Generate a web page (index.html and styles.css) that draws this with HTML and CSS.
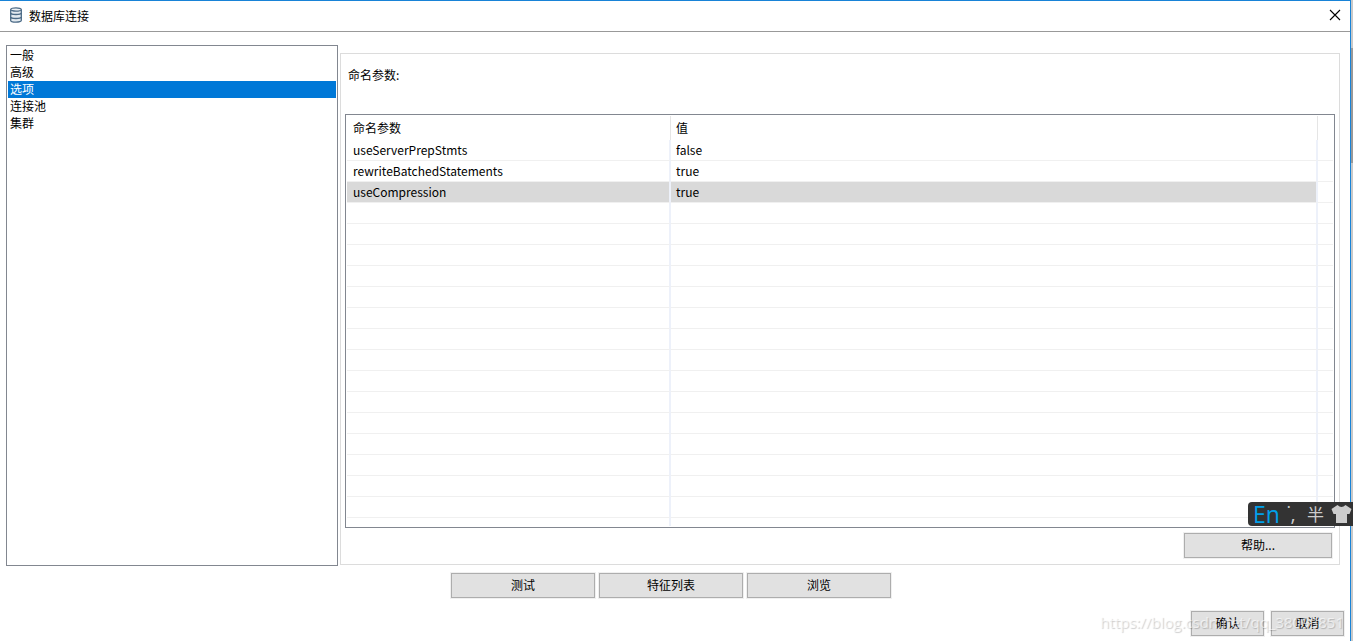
FILE: index.html
```html
<!DOCTYPE html>
<html lang="zh-CN">
<head>
<meta charset="utf-8">
<meta name="viewport" content="width=device-width, initial-scale=1">
<title>数据库连接</title>
<link rel="stylesheet" href="styles.css">
</head>
<body>
<div class="screen">
<main class="dialog">
  <header class="titlebar">
    <svg class="titlebar-icon" viewBox="0 0 14 16" aria-hidden="true">
      <path d="M1.700 2.500v11c0 1 2.200 1.700 5.300 1.700s5.300-.7 5.300-1.700v-11" fill="#e3eaf0" stroke="#4b6a86" stroke-width="1.300"/>
      <ellipse cx="7" cy="2.500" rx="5.300" ry="1.700" fill="#eef2f5" stroke="#4b6a86" stroke-width="1.300"/>
      <path d="M1.700 6c0 1 2.200 1.500 5.300 1.500S12.300 7 12.300 6M1.700 10c0 1 2.200 1.500 5.300 1.500s5.300-.5 5.300-1.500" fill="none" stroke="#4b6a86" stroke-width="1.500"/>
    </svg>
    <h1 class="title">数据库连接</h1>
    <button class="close" type="button" aria-label="关闭">
      <svg viewBox="0 0 12 12" aria-hidden="true"><path d="M1 1l10 10M11 1L1 11" stroke="#000" stroke-width="1.100"/></svg>
    </button>
  </header>

  <div class="content">
    <nav class="sections">
      <button class="section" type="button">一般</button>
      <button class="section" type="button">高级</button>
      <button class="section is-selected" type="button" aria-current="true">选项</button>
      <button class="section" type="button">连接池</button>
      <button class="section" type="button">集群</button>
    </nav>

    <section class="panel">
      <h2 class="panel-label">命名参数:</h2>
      <div class="grid">
        <table class="params">
          <colgroup><col class="col-name"><col class="col-value"><col class="col-rest"></colgroup>
          <thead>
            <tr><th scope="col">命名参数</th><th scope="col">值</th><td></td></tr>
          </thead>
          <tbody>
            <tr><td>useServerPrepStmts</td><td>false</td><td></td></tr>
            <tr><td>rewriteBatchedStatements</td><td>true</td><td></td></tr>
            <tr class="is-active"><td>useCompression</td><td>true</td><td></td></tr>
            <tr><td></td><td></td><td></td></tr>
            <tr><td></td><td></td><td></td></tr>
            <tr><td></td><td></td><td></td></tr>
            <tr><td></td><td></td><td></td></tr>
            <tr><td></td><td></td><td></td></tr>
            <tr><td></td><td></td><td></td></tr>
            <tr><td></td><td></td><td></td></tr>
            <tr><td></td><td></td><td></td></tr>
            <tr><td></td><td></td><td></td></tr>
            <tr><td></td><td></td><td></td></tr>
            <tr><td></td><td></td><td></td></tr>
            <tr><td></td><td></td><td></td></tr>
            <tr><td></td><td></td><td></td></tr>
            <tr><td></td><td></td><td></td></tr>
            <tr><td></td><td></td><td></td></tr>
            <tr class="tail"><td></td><td></td><td></td></tr>
          </tbody>
        </table>
      </div>
      <div class="panel-actions"><button class="button button-help" type="button">帮助...</button></div>
    </section>
  </div>

  <div class="tools">
    <button class="button button-tool" type="button">测试</button>
    <button class="button button-tool" type="button">特征列表</button>
    <button class="button button-tool" type="button">浏览</button>
  </div>

  <footer class="confirm">
    <button class="button button-small" type="button">确认</button>
    <button class="button button-small" type="button">取消</button>
  </footer>
</main>
<div class="behind"><div class="behind-thumb"></div></div>

<div class="ime">
  <span class="ime-lang">En</span>
  <span class="ime-punct">˙,</span>
  <span class="ime-width">半</span>
  <svg class="ime-shirt" viewBox="0 0 20 18" aria-hidden="true"><path d="M6 0Q10 4 14 0L20 4 18 9H15.500V18H4.500V9H2L0 4Z" fill="#ccc"/></svg>
</div>
<div class="watermark">https://blog.csdn.net/qq_38093851</div>
</div>
</body>
</html>
```
FILE: styles.css
```css
* { box-sizing: border-box; }

body {
  margin: 0;
  background: #fff;
  color: #000;
  font: 12px/17px "Noto Sans CJK SC", sans-serif;
}

button { font: inherit; color: inherit; }

.screen {
  position: relative;
  display: flex;
  min-height: 100vh;
  overflow: hidden;
}

.dialog {
  flex: 1;
  border-top: 1px solid #1883d7;
  border-right: 1px solid #1883d7;
}

.behind {
  width: 2px;
  padding-top: 48px;
  background: #c8c8c8;
}

.behind-thumb { height: 115px; background: #999; }

.titlebar {
  display: flex;
  align-items: center;
  gap: 6px;
  height: 31px;
  padding: 0 7px 2px 9px;
  border-bottom: 1px solid #999;
}

.titlebar-icon { width: 14px; height: 16px; }

.title {
  flex: 1;
  margin: 0;
  font-size: 12px;
  font-weight: 400;
}

.close {
  display: flex;
  padding: 2px;
  border: 0;
  background: none;
}

.close svg { width: 12px; height: 12px; }

.content {
  display: flex;
  gap: 2px;
  padding: 13px 10px 0 6px;
}

.sections {
  width: 332px;
  padding: 1px;
  border: 1px solid #828790;
}

.section {
  display: block;
  width: 100%;
  height: 17px;
  padding: 0 2px 2px;
  border: 0;
  background: none;
  line-height: 15px;
  text-align: left;
}

.section.is-selected { background: #0078d7; color: #fff; }

.panel {
  flex: 1;
  margin-top: 8px;
  margin-bottom: 1px;
  padding: 12px 4px 6px;
  border: 1px solid #dcdcdc;
}

.panel-label {
  margin: 0 3px 31px;
  font-size: 12px;
  font-weight: 400;
}

.grid { padding: 1px; border: 1px solid #828790; }

.params {
  width: 100%;
  table-layout: fixed;
  border-collapse: separate;
  border-spacing: 0;
}

.col-name { width: 324px; }
.col-rest { width: 15px; }

.params th {
  height: 24px;
  padding: 0 6px 2px;
  font-weight: 400;
  text-align: left;
}

.params td {
  height: 21px;
  padding: 0 6px;
  border-bottom: 1px solid #f0f0f0;
  line-height: 18px;
}

.params thead th { border-right: 1px solid #e5e5e5; }
.params thead td { border-bottom: 0; }
.params tbody td { border-right: 2px solid #edf1fa; }
.params tbody td:last-child { border-right: 0; }
.params th:nth-child(2), .params td:nth-child(2) { padding-left: 5px; }
.params .is-active td { background: #d9d9d9; }
.params .is-active td:last-child { background: none; }
.params .tail td { height: 8px; border-bottom: 0; }

.panel-actions {
  display: flex;
  justify-content: flex-end;
  padding: 5px 3px 0 0;
}

.button {
  height: 25px;
  padding: 0 0 2px;
  border: 1px solid #adadad;
  background: #e1e1e1;
  box-shadow: 0 0 0 1px #f0f0f0;
}

.button-help { width: 148px; }
.button-tool { width: 144px; }
.button-small { width: 73px; }

.tools {
  display: flex;
  justify-content: center;
  gap: 4px;
  padding: 7px 8px 0 0;
}

.confirm {
  display: flex;
  justify-content: flex-end;
  gap: 7px;
  padding: 13px 6px 4px;
}

.ime {
  position: absolute;
  right: 0;
  top: 502px;
  display: flex;
  align-items: center;
  width: 105px;
  height: 24px;
  padding-left: 5px;
  border-radius: 4px 0 0 4px;
  background: #333;
  color: #ccc;
}

.ime-lang { width: 34px; color: #00a0e9; font: 23px/24px "Open Sans", sans-serif; }
.ime-punct { width: 20px; font: 20px/22px "Open Sans", sans-serif; }
.ime-width { width: 24px; font-size: 17px; line-height: 24px; }
.ime-shirt { width: 21px; height: 18px; flex: none; }

.watermark {
  position: absolute;
  right: 9px;
  bottom: 8px;
  color: rgba(255, 255, 255, 0.6);
  font: 15px/22px "Open Sans", sans-serif;
  text-shadow: 1px 1px 1px rgba(0, 0, 0, 0.2);
  pointer-events: none;
}
```
